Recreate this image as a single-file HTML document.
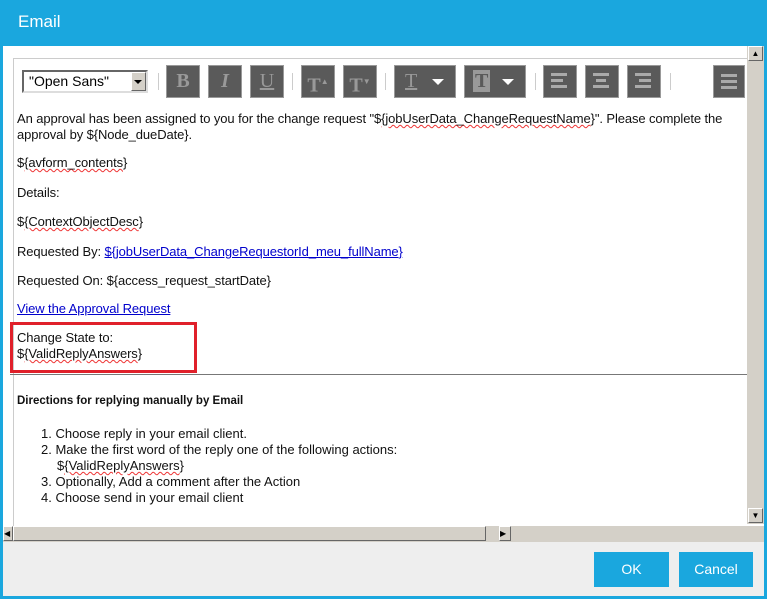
<!DOCTYPE html>
<html><head><style>
*{margin:0;padding:0;box-sizing:border-box}
body{width:767px;height:599px;background:#1aa7de;position:relative;overflow:hidden;font-family:"Liberation Sans",Arial,sans-serif}
.abs{position:absolute}
#title{left:18px;top:12px;color:#fff;font-size:17px}
#content{left:3px;top:46px;width:761px;height:496px;background:#fff}
#footer{left:3px;top:542px;width:761px;height:54px;background:#eeeeee}
.btn{position:absolute;top:552px;height:35px;background:#1aa7de;color:#fff;font-size:14px;text-align:center;line-height:35px}
.tb{position:absolute;top:65px;height:33px;background:#5a5a5a;border:1px solid #999;color:#999;font-family:"Liberation Serif",serif;font-size:20px;text-align:center;line-height:31px;font-weight:bold}
.sep{position:absolute;top:73px;width:1px;height:17px;background:#ccc}
.t{position:absolute;left:17px;font-size:13px;letter-spacing:-0.1px;color:#111;white-space:nowrap}
.sq{text-decoration:underline wavy #e33;text-decoration-thickness:1px}
a{color:#00c;text-decoration:underline}
.l{position:absolute;font-size:12.5px;color:#111;white-space:nowrap}
.arr{position:absolute;width:0;height:0;border-left:6px solid transparent;border-right:6px solid transparent;border-top:6px solid #fff}
.bar{position:absolute;height:3px;background:#aaa}
</style></head><body>
<div class="abs" id="title">Email</div>
<div class="abs" id="content"></div>
<div class="abs" style="left:13px;top:58px;width:734px;height:470px;border:1px solid #ccc;border-right:none;border-bottom:none"></div>
<div class="abs" style="left:22px;top:70px;width:126px;height:23px;border:2px solid #666;border-right-color:#ddd;border-bottom-color:#ddd;background:#fff;font-size:14px;line-height:19px;padding-left:5px">"Open Sans"</div>
<div class="abs" style="left:131px;top:72px;width:15px;height:19px;background:#d4d0c8;border:1px solid #fff;border-right-color:#666;border-bottom-color:#666"><div class="arr" style="left:2px;top:7px;border-top-color:#000;border-left-width:4px;border-right-width:4px;border-top-width:4px"></div></div>
<div class="sep" style="left:158px"></div>
<div class="tb" style="left:166px;width:34px">B</div>
<div class="tb" style="left:208px;width:34px;font-style:italic">I</div>
<div class="tb" style="left:250px;width:34px;text-decoration:underline;font-weight:normal">U</div>
<div class="sep" style="left:292px"></div>
<div class="tb" style="left:301px;width:34px">T<sup style="font-size:8px">▲</sup></div>
<div class="tb" style="left:343px;width:34px">T<sup style="font-size:8px">▼</sup></div>
<div class="sep" style="left:385px"></div>
<div class="tb" style="left:394px;width:62px;text-align:left;padding-left:10px;font-weight:normal;text-decoration:underline">T</div>
<div class="arr" style="left:432px;top:79px"></div>
<div class="tb" style="left:464px;width:62px;text-align:left;padding-left:8px"><span style="background:#999;color:#5a5a5a;padding:0 2px">T</span></div>
<div class="arr" style="left:502px;top:79px"></div>
<div class="sep" style="left:535px"></div>
<div class="tb" style="left:543px;width:34px"></div>
<div class="bar" style="left:551px;top:73px;width:16px"></div><div class="bar" style="left:551px;top:79px;width:12px"></div><div class="bar" style="left:551px;top:85px;width:16px"></div>
<div class="tb" style="left:585px;width:34px"></div>
<div class="bar" style="left:593px;top:73px;width:16px"></div><div class="bar" style="left:596px;top:79px;width:10px"></div><div class="bar" style="left:593px;top:85px;width:16px"></div>
<div class="tb" style="left:627px;width:34px"></div>
<div class="bar" style="left:635px;top:73px;width:16px"></div><div class="bar" style="left:639px;top:79px;width:12px"></div><div class="bar" style="left:635px;top:85px;width:16px"></div>
<div class="sep" style="left:670px"></div>
<div class="tb" style="left:713px;width:32px"></div>
<div class="bar" style="left:721px;top:74px;width:16px"></div><div class="bar" style="left:721px;top:80px;width:16px"></div><div class="bar" style="left:721px;top:86px;width:16px"></div>
<div class="t" style="top:111px">An approval has been assigned to you for the change request "$<span class="sq">{jobUserData_ChangeRequestName</span>}". Please complete the</div>
<div class="t" style="top:127px">approval by ${Node_dueDate}.</div>
<div class="t" style="top:155px">$<span class="sq">{avform_contents</span>}</div>
<div class="t" style="top:185px">Details:</div>
<div class="t" style="top:214px">$<span class="sq">{ContextObjectDesc</span>}</div>
<div class="t" style="top:244px">Requested By: <a>${jobUserData_ChangeRequestorId_meu_fullName}</a></div>
<div class="t" style="top:273px">Requested On: ${access_request_startDate}</div>
<div class="t" style="top:301px"><a>View the Approval Request</a></div>
<div class="t" style="top:330px">Change State to:</div>
<div class="t" style="top:346px">$<span class="sq">{ValidReplyAnswers</span>}</div>
<div class="abs" style="left:10px;top:322px;width:187px;height:51px;border:3px solid #e0202a"></div>
<div class="abs" style="left:10px;top:374px;width:737px;height:1px;background:#777"></div>
<div class="l" style="left:17px;top:395px;font-weight:bold;font-size:11.5px">Directions for replying manually by Email</div>
<div class="l" style="left:41px;top:426px;font-size:13px">1. Choose reply in your email client.</div>
<div class="l" style="left:41px;top:442px;font-size:13px">2. Make the first word of the reply one of the following actions:</div>
<div class="l" style="left:57px;top:458px;font-size:13px">$<span class="sq">{ValidReplyAnswers</span>}</div>
<div class="l" style="left:41px;top:474px;font-size:13px">3. Optionally, Add a comment after the Action</div>
<div class="l" style="left:41px;top:490px;font-size:13px">4. Choose send in your email client</div>
<div class="abs" style="left:747px;top:46px;width:17px;height:478px;background:#d4d0c8"></div>
<div class="abs" style="left:748px;top:46px;width:15px;height:15px;background:#d4d0c8;border:1px solid #fff;border-right-color:#666;border-bottom-color:#666;font-size:8px;text-align:center;line-height:13px">▲</div>
<div class="abs" style="left:748px;top:508px;width:15px;height:15px;background:#d4d0c8;border:1px solid #fff;border-right-color:#666;border-bottom-color:#666;font-size:8px;text-align:center;line-height:13px">▼</div>
<div class="abs" style="left:3px;top:526px;width:761px;height:16px;background:#d4d0c8"></div>
<div class="abs" style="left:3px;top:526px;width:10px;height:15px;border:1px solid #fff;border-right-color:#666;border-bottom-color:#666;font-size:8px;line-height:13px">◀</div>
<div class="abs" style="left:13px;top:526px;width:473px;height:15px;border:1px solid #fff;border-right-color:#666;border-bottom-color:#666"></div>
<div class="abs" style="left:499px;top:526px;width:12px;height:15px;border:1px solid #fff;border-right-color:#666;border-bottom-color:#666;font-size:8px;line-height:13px">▶</div>
<div class="abs" id="footer"></div>
<div class="btn" style="left:594px;width:75px">OK</div>
<div class="btn" style="left:679px;width:74px">Cancel</div>
</body></html>
